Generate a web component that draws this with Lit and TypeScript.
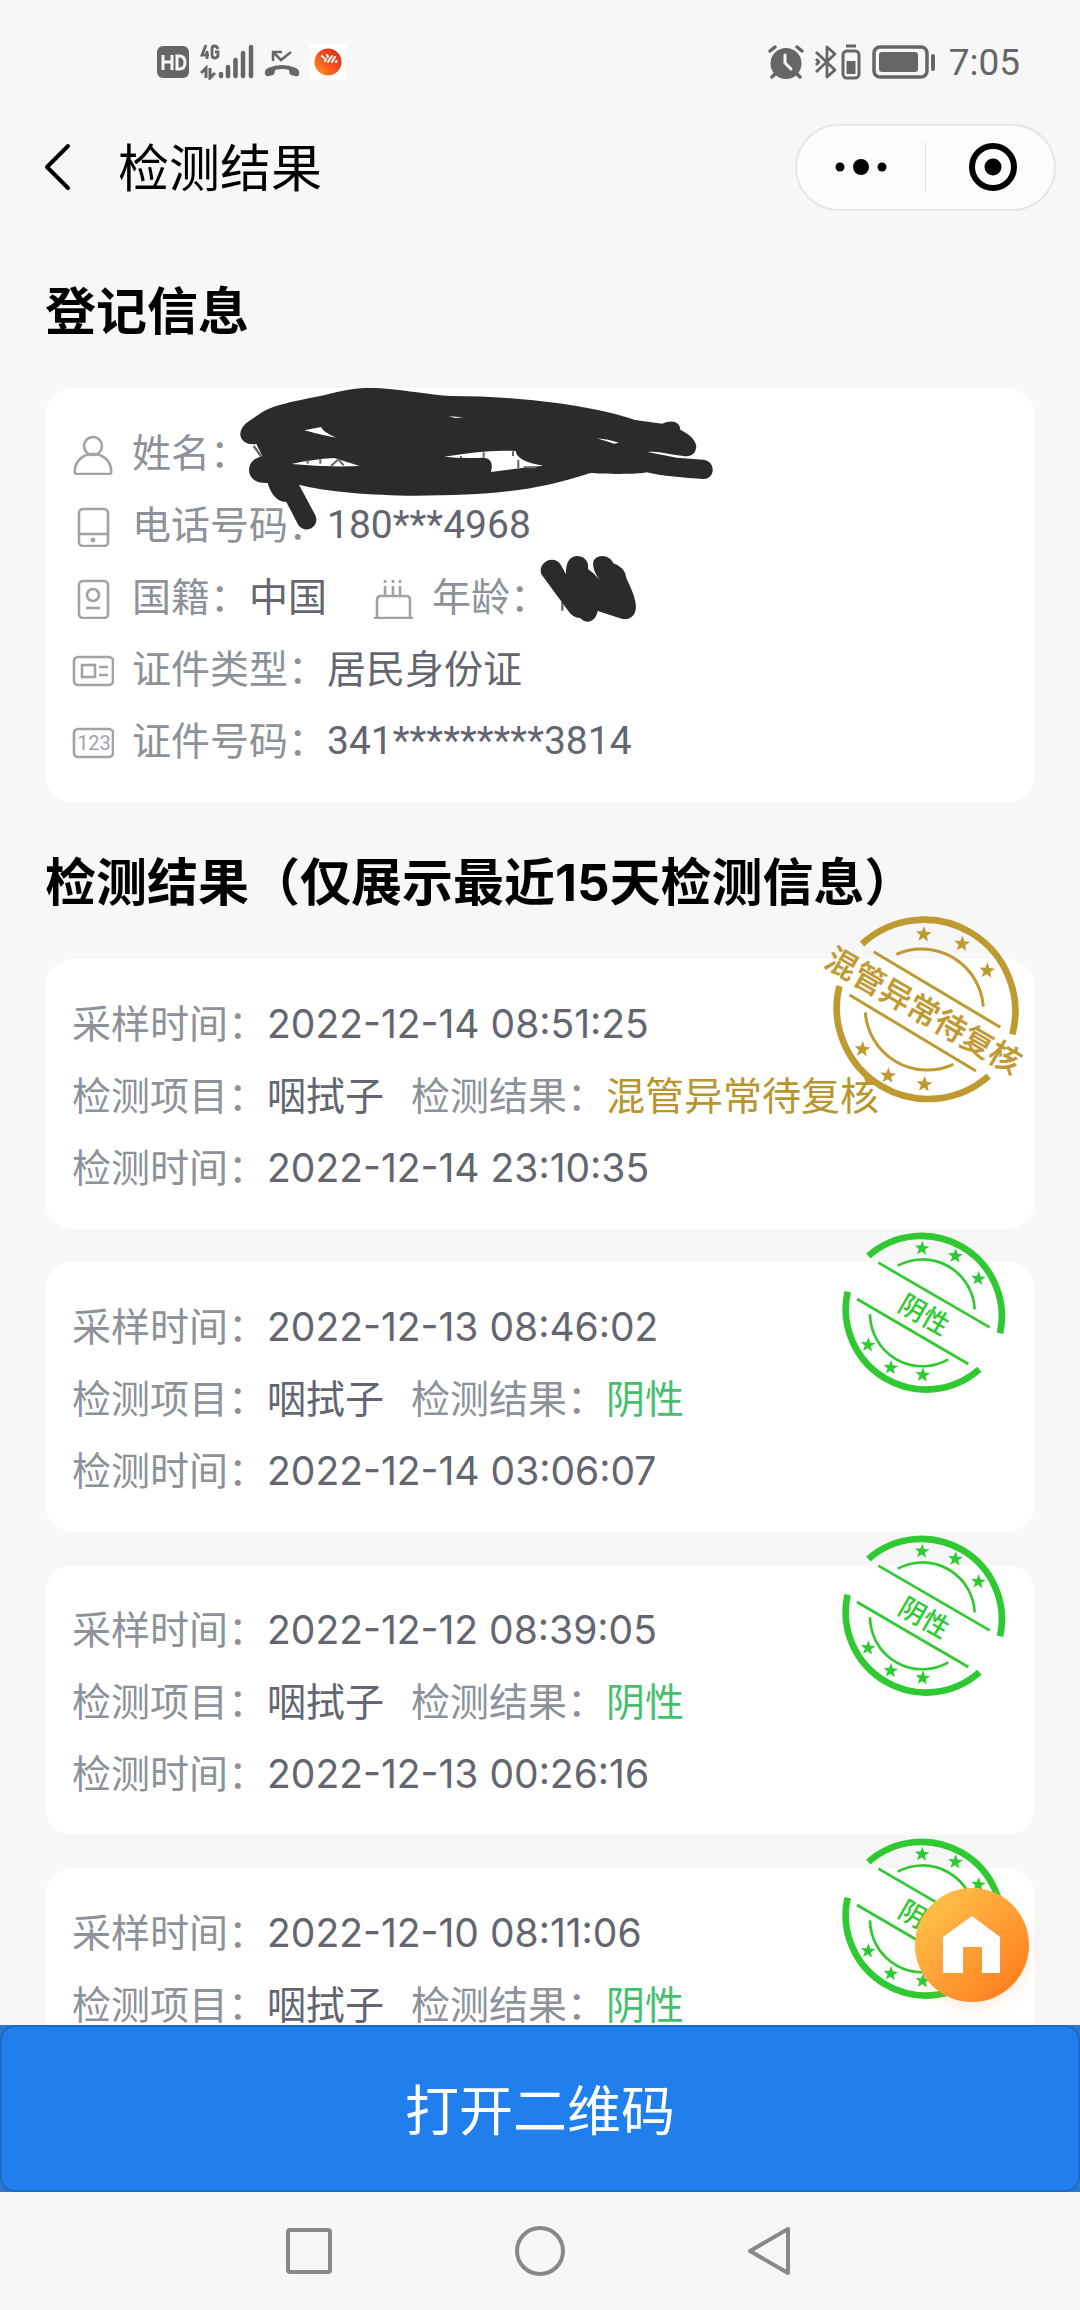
import { LitElement, html, svg, css, nothing } from "lit";
import { customElement, property } from "lit/decorators.js";

interface TestRecord {
  sampled: string;
  item: string;
  result: string;
  tested?: string;
  negative: boolean;
}

const RECORDS: TestRecord[] = [
  { sampled: "2022-12-14 08:51:25", item: "咽拭子", result: "混管异常待复核", tested: "2022-12-14 23:10:35", negative: false },
  { sampled: "2022-12-13 08:46:02", item: "咽拭子", result: "阴性", tested: "2022-12-14 03:06:07", negative: true },
  { sampled: "2022-12-12 08:39:05", item: "咽拭子", result: "阴性", tested: "2022-12-13 00:26:16", negative: true },
  { sampled: "2022-12-10 08:11:06", item: "咽拭子", result: "阴性", negative: true },
];

const star = (cx: number, cy: number, r: number) => {
  const points: string[] = [];
  for (let i = 0; i < 10; i++) {
    const radius = i % 2 ? r * 0.42 : r;
    const angle = (Math.PI / 5) * i - Math.PI / 2 + 0.08;
    points.push(`${(cx + radius * Math.cos(angle)).toFixed(1)},${(cy + radius * Math.sin(angle)).toFixed(1)}`);
  }
  return svg`<polygon points=${points.join(" ")} fill="currentColor" />`;
};

/** Round rubber stamp laid over the top right corner of a record. */
@customElement("result-stamp")
export class ResultStamp extends LitElement {
  static styles = css`
    :host { display: block; }
    svg { display: block; width: 200px; height: 200px; overflow: visible; }
    .ok { color: #2fc932; }
    .review { color: #bf9a30; }
    text { font-family: Inter, "Noto Sans CJK SC", sans-serif; font-weight: 500; fill: currentColor; text-anchor: middle; }
    .ok text { font-size: 80px; }
    .review text { font-size: 94px; stroke: currentColor; stroke-width: 1px; }
  `;

  @property() label = "";
  @property({ type: Boolean }) negative = false;

  render() {
    return this.negative
      ? html`<svg class="ok" viewBox="75 9 600 600" fill="none" stroke="currentColor" role="img" aria-label=${this.label}>
          <path stroke-width="20" d="M205 138A241 241 0 0 1 600 370M143 245A241 241 0 0 0 538 478" />
          <path stroke-width="8" d="M293 167A157 157 0 0 1 524 298M210 313A157 157 0 0 0 445 448M235 158L569 352M171 267L505 462" />
          <g stroke="none">
            ${star(366, 115, 23)}${star(466, 138, 23)}${star(535, 206, 23)}${star(204, 405, 23)}${star(272, 473, 23)}${star(368, 495, 23)}
            <text transform="translate(373 313) rotate(30)" y="30">${this.label}</text>
          </g>
        </svg>`
      : html`<svg class="review" viewBox="75 30 600 600" fill="none" stroke="currentColor" role="img" aria-label=${this.label}>
          <path stroke-width="20" d="M186 132A274 274 0 0 1 637 403M118 258A274 274 0 0 0 566 528" />
          <path stroke-width="9" d="M289 163A186 186 0 0 1 550 320M196 337A186 186 0 0 0 460 493M221 155L601 382M149 285L528 513" />
          <g stroke="none">
            ${star(371, 103, 25)}${star(486, 132, 25)}${star(561, 212, 25)}${star(187, 448, 25)}${star(264, 527, 25)}${star(373, 553, 25)}
            <text transform="translate(371 331) rotate(30)" y="35">${this.label}</text>
          </g>
        </svg>`;
  }
}

const ICONS = {
  user: svg`<circle cx="21" cy="11" r="9" /><path d="M5 39H37Q40 39 39 35A18 16 0 0 0 3 35Q2 39 5 39Z" />`,
  phone: svg`<rect x="7" y="2" width="29" height="37" rx="4" /><path d="M7 27H36" /><circle cx="21" cy="33" r="2" fill="currentColor" stroke-width="1" />`,
  nation: svg`<rect x="7" y="2" width="29" height="37" rx="4" /><circle cx="21" cy="16" r="6" /><path d="M14 29H28" />`,
  cake: svg`<path d="M5 39V21Q5 17 9 17H34Q38 17 38 21V39M2 39H41M13 17V7M21 17V7M28 17V7M13 1V4M21 1V4M28 1V4" />`,
  card: svg`<rect x="2" y="6" width="39" height="28" rx="4" /><rect x="10" y="14" width="13" height="12" /><path d="M27 16H36M27 24H36" />`,
  number: svg`<rect x="2" y="6" width="39" height="28" rx="4" /><text x="22" y="27">123</text>`,
};

@customElement("app-root")
export class AppRoot extends LitElement {
  static styles = css`
    :host {
      display: flex;
      flex-direction: column;
      height: 100vh;
      overflow: hidden;
      background: #f7f7f7;
      color: #000;
      font-family: Inter, "Noto Sans CJK SC", sans-serif;
      font-size: 39px;
      line-height: 72px;
    }
    * { box-sizing: border-box; }
    svg { display: block; flex: none; }
    button { font: inherit; color: inherit; border: 0; margin: 0; padding: 0; background: none; }

    .status {
      display: flex;
      justify-content: space-between;
      padding: 26px 60px 0 156px;
      height: 100px;
      color: #666;
    }
    .status-group { display: flex; align-items: center; height: 72px; }
    .signals { gap: 10px; }
    .levels { gap: 11px; }
    .clock { font-family: Roboto, sans-serif; font-size: 37px; padding: 2px 0 0 2px; }

    .nav { display: flex; align-items: center; height: 134px; padding: 0 24px 0 36px; }
    .back { display: flex; padding: 8px; }
    .nav-title { flex: 1; margin: 0 0 0 38px; padding-top: 4px; font-size: 51px; font-weight: 400; }
    .capsule {
      display: flex;
      align-items: center;
      width: 261px;
      height: 87px;
      border: 2px solid #e6e6e6;
      border-radius: 44px;
      background: #fcfcfc;
    }
    .capsule button { flex: 1; display: flex; justify-content: center; }
    .capsule .close svg { margin-left: 6px; }
    .capsule-line { width: 1px; height: 51px; background: #dedede; }

    .content { flex: 1; min-height: 0; overflow: hidden; padding: 42px 45px 0; }
    h2 { margin: 0 0 40px; font-size: 51px; font-weight: 700; white-space: nowrap; }
    .card { position: relative; border-radius: 28px; background: #fff; padding: 29px 27px 25px; }
    .card.short { padding-bottom: 97px; }
    .info { margin-bottom: 45px; }
    .records { display: flex; flex-direction: column; gap: 33px; }
    .row { display: flex; align-items: center; white-space: nowrap; color: #63656f; }
    .label { color: #8d9298; }
    .code { font-family: Roboto, sans-serif; }
    .icon { width: 42px; height: 40px; margin: 4px 18px 0 0; color: #9fa3a8; }
    .icon text { font-family: Roboto, sans-serif; font-size: 20px; text-anchor: middle; fill: currentColor; stroke: none; }
    .second { margin-left: 45px; }
    .result-label { margin-left: 27px; }
    .good { color: #45bf6e; }
    .review { color: #b8962e; }
    .scribble { position: absolute; left: 180px; top: -8px; width: 500px; height: 250px; }
    .stamp { position: absolute; right: 10px; top: -49px; }

    .footer { position: relative; background: #2f76cf; }
    .open {
      display: block;
      width: 100%;
      height: 167px;
      padding-top: 6px;
      border: 2px solid #1c69c6;
      border-radius: 15px;
      background: #217fed;
      color: #fff;
      font-size: 54px;
    }
    .home {
      position: absolute;
      right: 51px;
      top: -137px;
      width: 114px;
      height: 114px;
      border-radius: 50%;
      background: linear-gradient(135deg, #fecb50, #ff7d20 90%);
      box-shadow: 0 6px 18px rgba(255, 140, 50, 0.16);
    }
    .system { display: flex; justify-content: center; align-items: center; gap: 183px; height: 118px; color: #888; }
  `;

  private icon(name: keyof typeof ICONS) {
    return html`<svg class="icon" viewBox="0 0 42 40" fill="none" stroke="currentColor" stroke-width="2.600" aria-hidden="true">${ICONS[name]}</svg>`;
  }

  private status() {
    return html`<div class="status">
      <div class="status-group signals">
        <svg width="34" height="34" viewBox="0 0 34 34" aria-label="HD">
          <rect x="1" y="1" width="32" height="32" rx="6" fill="#666" />
          <path d="M7 10V25M16 10V25M7 17H16M21 11V24H23Q29 24 29 17.500Q29 11 23 11Z" fill="none" stroke="#f7f7f7" stroke-width="3" />
        </svg>
        <svg width="54" height="36" viewBox="0 0 54 36" fill="none" stroke="#666" aria-label="4G">
          <path stroke-width="2.800" d="M6 1L2 11H9M7 7V15M18 5Q17 2 14.500 2Q12 2 12 5V11Q12 14 14.500 14Q18 14 18 11V8H15" />
          <path stroke-width="3" d="M6 34V24L1 29M10 24V34L15 29" />
          <path stroke-width="4.500" stroke-linecap="round" d="M21 30V32M28 23V32M35.500 16V32M43 9V32M51 3V32" />
        </svg>
        <svg width="36" height="34" viewBox="0 0 36 34" fill="none" stroke="#666" aria-hidden="true">
          <path stroke-width="2.500" d="M9 16V7H18M9 7L17 15L27 7" />
          <path fill="#666" stroke="none" d="M1 29Q0 25 4 23Q18 17 32 23Q36 25 35 30Q34 32 31 31L27 30Q25 29 25 25Q18 23 11 25Q11 29 9 30L5 31Q2 32 1 29Z" />
        </svg>
        <svg width="36" height="36" viewBox="0 0 36 36" aria-hidden="true">
          <defs><linearGradient id="ball" x1="0" y1="1" x2="1" y2="0"><stop offset="0" stop-color="#ff9d1e" /><stop offset="0.500" stop-color="#f4501f" /><stop offset="1" stop-color="#d92616" /></linearGradient></defs>
          <rect width="36" height="36" fill="#fff" />
          <circle cx="18" cy="18" r="13.500" fill="url(#ball)" />
          <path d="M12 12L14 14M15 17L16 15M17 11L18 13M18 18L22 12M22 18L25 13M26 18L26.500 17" fill="none" stroke="#fff" stroke-width="2" stroke-linecap="round" />
        </svg>
      </div>
      <div class="status-group levels">
        <svg width="36" height="34" viewBox="0 0 36 34" fill="none" stroke="#666" stroke-linecap="round" aria-label="闹钟">
          <circle cx="18" cy="18.500" r="15.500" fill="#666" stroke="none" />
          <path stroke-width="3.500" d="M2 6L7 2M34 6L29 2M7 29L4 32M29 29L32 32" />
          <path stroke="#f7f7f7" stroke-width="3" d="M17 10V18L23 24" />
        </svg>
        <svg width="46" height="36" viewBox="0 0 46 36" fill="none" stroke="#666" aria-label="蓝牙">
          <path stroke-width="2.800" stroke-linejoin="round" d="M1 8L20 26L12 33V3L20 10L1 28M1 15L4 18L1 21" />
          <rect x="28" y="7" width="16" height="27" rx="4" stroke-width="3" />
          <path stroke-width="3" d="M31 2H41" /><rect x="31.500" y="17" width="9" height="13" fill="#666" stroke="none" />
        </svg>
        <svg width="64" height="36" viewBox="0 0 64 36" fill="none" stroke="#666" aria-label="电量">
          <rect x="2" y="3" width="53" height="30" rx="6" stroke-width="3.500" />
          <rect x="7" y="8" width="39" height="20" rx="3" fill="#666" stroke="none" />
          <path stroke-width="4" stroke-linecap="round" d="M61 12V25" />
        </svg>
        <span class="clock">7:05</span>
      </div>
    </div>`;
  }

  private scribble() {
    return html`<svg class="scribble" viewBox="0 0 1500 750" aria-hidden="true">
      <g fill="none" stroke="#63656f" stroke-width="7"><path d="M86 198L108 228" /><path d="M1012 665V692" /></g>
      <g fill="#2b2b2b">
        <path fill-rule="evenodd" d="M46 165C44 135 80 118 98 106C140 75 180 70 300 45C390 20 440 22 500 28C580 36 640 48 680 48C850 48 1080 70 1230 120L1312 131C1340 118 1365 125 1366 149C1400 165 1418 190 1413 205C1408 232 1385 230 1370 227C1335 224 1300 212 1268 216L1355 233L1435 239C1473 243 1472 297 1435 297C1380 294 1310 288 1264 277C1240 284 1130 282 1096 279C930 335 780 347 570 347C440 346 300 335 222 314L269 402C290 440 240 465 220 435L184 366C150 366 134 330 128 309C85 312 68 285 73 262C77 240 98 232 112 228L94 192C68 196 49 185 46 165Z
          M238 151L288 141Q296 158 334 173Q300 168 238 151Z
          M200 252Q260 238 328 234L404 258Q300 262 200 252Z
          M658 230C730 219 800 209 872 213Q876 245 955 257Q880 264 798 276Q808 236 776 233Q710 236 658 230Z
          M1116 175Q1150 178 1182 188L1168 191Z
          M670 109L716 112L690 114Z" />
      </g>
      <path d="M248 241V251M286 238V251M318 258L340 238L356 256M708 228V234M776 217V233M864 214V228M880 240V265M896 262H932" fill="none" stroke="#63656f" stroke-width="6" />
      <path fill="#2b2b2b" d="M949 583C936 545 990 522 1008 556L1023 583C1022 545 1035 529 1057 528C1085 529 1092 552 1089 567Q1108 580 1124 600C1105 575 1097 545 1112 535C1130 520 1157 530 1165 550Q1200 560 1205 597Q1232 650 1233 680C1232 712 1210 720 1190 716L1118 693C1112 725 1085 735 1066 714Q1045 715 1030 693Z" />
    </svg>`;
  }

  private record(r: TestRecord) {
    return html`<article class=${r.tested ? "card" : "card short"}>
      <div class="row"><span class="label">采样时间：</span><span>${r.sampled}</span></div>
      <div class="row">
        <span class="label">检测项目：</span><span>${r.item}</span>
        <span class="label result-label">检测结果：</span><span class=${r.negative ? "good" : "review"}>${r.result}</span>
      </div>
      ${r.tested ? html`<div class="row"><span class="label">检测时间：</span><span>${r.tested}</span></div>` : nothing}
      <result-stamp class="stamp" .label=${r.result} .negative=${r.negative}></result-stamp>
    </article>`;
  }

  render() {
    return html`
      ${this.status()}
      <header class="nav">
        <button class="back" aria-label="返回">
          <svg width="28" height="48" viewBox="0 0 28 48" fill="none" stroke="#000" stroke-width="4" stroke-linecap="round" stroke-linejoin="round"><path d="M24 3L3 24L24 45" /></svg>
        </button>
        <h1 class="nav-title">检测结果</h1>
        <div class="capsule">
          <button aria-label="更多"><svg width="52" height="18" viewBox="0 0 52 18"><circle cx="5" cy="9" r="4.500" /><circle cx="26" cy="9" r="8" /><circle cx="47" cy="9" r="4.500" /></svg></button>
          <span class="capsule-line"></span>
          <button class="close" aria-label="关闭"><svg width="48" height="48" viewBox="0 0 48 48"><circle cx="24" cy="24" r="21" fill="none" stroke="#000" stroke-width="6" /><circle cx="24" cy="24" r="8.500" /></svg></button>
        </div>
      </header>
      <main class="content">
        <h2>登记信息</h2>
        <section class="card info">
          <div class="row">${this.icon("user")}<span class="label">姓名：</span></div>
          <div class="row">${this.icon("phone")}<span class="label">电话号码：</span><span class="code">180***4968</span></div>
          <div class="row">
            ${this.icon("nation")}<span class="label">国籍：</span><span>中国</span>
            <span class="second">${this.icon("cake")}</span><span class="label">年龄：</span>
          </div>
          <div class="row">${this.icon("card")}<span class="label">证件类型：</span><span>居民身份证</span></div>
          <div class="row">${this.icon("number")}<span class="label">证件号码：</span><span class="code">341*********3814</span></div>
          ${this.scribble()}
        </section>
        <h2>检测结果（仅展示最近15天检测信息）</h2>
        <section class="records">${RECORDS.map((r) => this.record(r))}</section>
      </main>
      <footer class="footer">
        <button class="open">打开二维码</button>
        <button class="home" aria-label="首页">
          <svg width="114" height="114" viewBox="0 0 114 114" fill="#fff"><path d="M57 28L85 49V85H67V59H48V85H28V49Z" /></svg>
        </button>
      </footer>
      <nav class="system">
        <svg width="50" height="50" viewBox="0 0 50 50" fill="none" stroke="currentColor" stroke-width="4"><rect x="6" y="4" width="42" height="42" rx="2" /></svg>
        <svg width="50" height="50" viewBox="0 0 50 50" fill="none" stroke="currentColor" stroke-width="4"><circle cx="25" cy="25" r="23" /></svg>
        <svg width="50" height="50" viewBox="0 0 50 50" fill="none" stroke="currentColor" stroke-width="4" stroke-linejoin="round"><path d="M40 3V47L2 25Z" /></svg>
      </nav>
    `;
  }
}
